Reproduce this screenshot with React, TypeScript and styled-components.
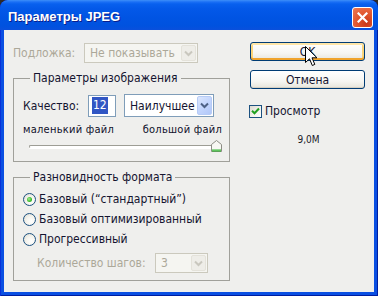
import React from "react";
import styled, { createGlobalStyle } from "styled-components";

const Global = createGlobalStyle`
  html, body { margin: 0; padding: 0; background: #2f2b25; }
  body {
    width: 378px; height: 296px; overflow: hidden;
    font-family: "DejaVu Sans Condensed", "DejaVu Sans", sans-serif;
  }
  * { box-sizing: border-box; }
`;

const Window = styled.div`
  width: 378px;
  height: 296px;
  display: flex;
  flex-direction: column;
  background: #0a4fe2;
  border-radius: 8px 8px 0 0;
  overflow: hidden;
  box-shadow: inset 1px 0 #0831d9, inset -1px 0 #001ea0, inset 0 -1px #001ea0;
`;

const TitleBar = styled.div`
  height: 30px;
  flex: none;
  display: flex;
  align-items: center;
  justify-content: space-between;
  padding: 4px 5px 0 8px;
  background: linear-gradient(
    to bottom,
    #3d8ff8 0px,
    #1a6ff5 2px,
    #0860ee 4px,
    #0358e8 9px,
    #0054e3 18px,
    #0052df 26px,
    #0a50dc 30px
  );
  border-radius: 8px 8px 0 0;
`;

const Title = styled.span`
  font-family: "Liberation Sans", Arial, sans-serif;
  font-weight: bold;
  font-size: 13px;
  color: #ffffff;
  text-shadow: 1px 1px 0 #0a1e8c;
  margin-top: -1px;
`;

const CloseButton = styled.div`
  width: 21px;
  height: 21px;
  border: 1px solid #ffffff;
  border-radius: 3px;
  background: radial-gradient(circle at 70% 80%, #c8381a 0%, #e0542c 45%, #ef7a55 100%);
  display: flex;
  align-items: center;
  justify-content: center;
`;

const Client = styled.div`
  flex: 1;
  margin: 0 4px 4px 4px;
  background: #efefed;
  display: grid;
  grid-template-columns: 217px 115px;
  column-gap: 20px;
  align-items: start;
  padding: 13px 0 0 9px;
  color: #141430;
  font-size: 12px;
`;

const LeftCol = styled.div`
  display: flex;
  flex-direction: column;
`;

const RightCol = styled.div`
  display: flex;
  flex-direction: column;
  margin-top: -1px;
`;

const Row = styled.div<{ $h: number; $mt?: number }>`
  display: flex;
  align-items: center;
  height: ${(p) => p.$h}px;
  margin-top: ${(p) => p.$mt ?? 0}px;
`;

const Label = styled.span<{ $w?: number; $disabled?: boolean }>`
  width: ${(p) => (p.$w ? `${p.$w}px` : "auto")};
  flex: none;
  white-space: nowrap;
  color: ${(p) => (p.$disabled ? "#aca899" : "#141430")};
`;

const SelectBox = styled.div<{ $w: number; $h: number; $disabled?: boolean; $ml?: number }>`
  width: ${(p) => p.$w}px;
  height: ${(p) => p.$h}px;
  margin-left: ${(p) => p.$ml ?? 0}px;
  display: flex;
  align-items: stretch;
  padding: 1px;
  border: 1px solid ${(p) => (p.$disabled ? "#cbc9bd" : "#7f9db9")};
  background: ${(p) => (p.$disabled ? "#f5f5f1" : "#ffffff")};
`;

const SelectText = styled.span<{ $disabled?: boolean }>`
  flex: 1;
  display: flex;
  align-items: center;
  padding-left: 4px;
  white-space: nowrap;
  overflow: hidden;
  color: ${(p) => (p.$disabled ? "#aca899" : "#141430")};
`;

const DropButton = styled.span<{ $disabled?: boolean }>`
  width: 15px;
  flex: none;
  border-radius: 2px;
  display: flex;
  align-items: center;
  justify-content: center;
  border: 1px solid ${(p) => (p.$disabled ? "#e4e2da" : "#b6cbf6")};
  background: ${(p) =>
    p.$disabled
      ? "#eeede8"
      : "linear-gradient(135deg, #dce7fd 0%, #c3d5fd 50%, #b1c7f8 100%)"};
`;

const TextInput = styled.div`
  width: 28px;
  height: 22px;
  flex: none;
  border: 1px solid #7f9db9;
  background: #ffffff;
  display: flex;
  align-items: center;
  padding-left: 3px;
`;

const Selected = styled.span`
  background: #3156c4;
  color: #ffffff;
  padding: 1px 1px;
  line-height: 15px;
`;

const Group = styled.fieldset<{ $mt: number; $pt: number; $pb: number }>`
  margin: ${(p) => p.$mt}px 0 0 0;
  padding: ${(p) => p.$pt}px 7px ${(p) => p.$pb}px 9px;
  border: 1px solid #a0a09a;
  min-width: 0;
  width: 217px;
`;

const Legend = styled.legend`
  padding: 0 3px;
  margin-left: 7px;
  line-height: 14px;
  font-size: 12px;
  color: #141430;
`;

const SmallLabels = styled.div`
  display: flex;
  justify-content: space-between;
  height: 12px;
  margin-top: 7px;
  font-size: 11px;
  letter-spacing: 0.25px;
  line-height: 12px;
  color: #10102a;
`;

const Slider = styled.div`
  position: relative;
  height: 12px;
  margin-top: 4px;
  display: flex;
  align-items: center;
`;

const Track = styled.div`
  height: 3px;
  flex: 1;
  margin: 0 4px 0 6px;
  border-radius: 2px;
  border-top: 1px solid #9d9d95;
  border-left: 1px solid #9d9d95;
  background: #ffffff;
  box-shadow: 0 1px 0 #ffffff;
`;

const Thumb = styled.svg`
  position: absolute;
  right: 0;
  top: 0;
`;

const RadioRow = styled.label`
  display: flex;
  align-items: center;
  gap: 3px;
  height: 20px;
`;

const Radio = styled.span<{ $checked?: boolean }>`
  position: relative;
  width: 13px;
  height: 13px;
  flex: none;
  border-radius: 50%;
  border: 1px solid #1c5180;
  background: radial-gradient(circle at 65% 65%, #ffffff 0%, #f3f2ec 50%, #d8d6cc 100%);
  &::after {
    content: "";
    display: ${(p) => (p.$checked ? "block" : "none")};
    position: absolute;
    left: 3px;
    top: 3px;
    width: 5px;
    height: 5px;
    border-radius: 50%;
    background: radial-gradient(circle at 40% 40%, #a6ef98 0%, #3fbf2f 55%, #1d9a1d 100%);
  }
`;

const StepsRow = styled.div`
  display: flex;
  align-items: center;
  height: 20px;
  margin-top: 4px;
  padding-left: 14px;
`;

const Button = styled.div<{ $default?: boolean; $mt?: number }>`
  position: relative;
  height: 19px;
  margin-top: ${(p) => p.$mt ?? 0}px;
  border: 1px solid #003c74;
  border-radius: 3px;
  display: flex;
  align-items: center;
  justify-content: center;
  color: #141430;
  background: linear-gradient(to bottom, #ffffff 0%, #f6f6f2 60%, #e6e4da 100%);
  box-shadow: ${(p) =>
    p.$default
      ? "inset 0 2px 0 #ffe6a8, inset 0 -2px 0 #f0a42c, inset 2px 0 0 #fbd57a, inset -2px 0 0 #fbd57a"
      : "inset 0 -1px 0 #d6d0c2"};
`;

const Cursor = styled.svg`
  position: absolute;
  left: 54px;
  top: 3px;
`;

const CheckRow = styled.div`
  display: flex;
  align-items: center;
  gap: 3px;
  height: 14px;
  margin-top: 15px;
  margin-left: -1px;
`;

const CheckBox = styled.span`
  width: 13px;
  height: 13px;
  flex: none;
  border: 1px solid #1c5180;
  background: linear-gradient(135deg, #dcdad0 0%, #f4f3ee 60%, #ffffff 100%);
  display: flex;
  align-items: center;
  justify-content: center;
`;

const SizeInfo = styled.div`
  margin-top: 16px;
  text-align: center;
  font-size: 10px;
  line-height: 12px;
  color: #1a1a2a;
  padding-left: 2px;
`;

const Chevron = ({ disabled }: { disabled?: boolean }) => (
  <svg width="9" height="7" viewBox="0 0 9 7">
    <path
      d="M1 1.5 L4.5 5 L8 1.5"
      fill="none"
      stroke={disabled ? "#c9c7be" : "#4d6185"}
      strokeWidth="2"
    />
  </svg>
);

export default function App() {
  return (
    <>
      <Global />
      <Window>
        <TitleBar>
          <Title>Параметры JPEG</Title>
          <CloseButton>
            <svg width="11" height="11" viewBox="0 0 11 11">
              <path d="M1.5 1.5 L9.5 9.5 M9.5 1.5 L1.5 9.5" stroke="#fff" strokeWidth="2.2" strokeLinecap="square" />
            </svg>
          </CloseButton>
        </TitleBar>
        <Client>
          <LeftCol>
            <Row $h={20}>
              <Label $w={71} $disabled>Подложка:</Label>
              <SelectBox $w={114} $h={20} $disabled>
                <SelectText $disabled>Не показывать</SelectText>
                <DropButton $disabled>
                  <Chevron disabled />
                </DropButton>
              </SelectBox>
            </Row>

            <Group $mt={8} $pt={9} $pb={9}>
              <Legend>Параметры изображения</Legend>
              <Row $h={23}>
                <Label $w={65}>Качество:</Label>
                <TextInput>
                  <Selected>12</Selected>
                </TextInput>
                <SelectBox $w={90} $h={23} $ml={8}>
                  <SelectText>Наилучшее</SelectText>
                  <DropButton>
                    <Chevron />
                  </DropButton>
                </SelectBox>
              </Row>
              <SmallLabels>
                <span>маленький файл</span>
                <span>большой файл</span>
              </SmallLabels>
              <Slider>
                <Track />
                <Thumb width="11" height="12" viewBox="0 0 11 12">
                  <path d="M0.5 11.5 V4.5 L5.5 0.5 L10.5 4.5 V11.5 Z" fill="#f7f7f3" stroke="#8c8c84" />
                  <path d="M1 10 H10 M1 11 H10" stroke="#2fb52f" strokeWidth="1" />
                </Thumb>
              </Slider>
            </Group>

            <Group $mt={8} $pt={5} $pb={7}>
              <Legend>Разновидность формата</Legend>
              <RadioRow>
                <Radio $checked />
                <span>Базовый (“стандартный”)</span>
              </RadioRow>
              <RadioRow>
                <Radio />
                <span>Базовый оптимизированный</span>
              </RadioRow>
              <RadioRow>
                <Radio />
                <span>Прогрессивный</span>
              </RadioRow>
              <StepsRow>
                <Label $w={118} $disabled>Количество шагов:</Label>
                <SelectBox $w={53} $h={20} $disabled>
                  <SelectText $disabled>3</SelectText>
                  <DropButton $disabled>
                    <Chevron disabled />
                  </DropButton>
                </SelectBox>
              </StepsRow>
            </Group>
          </LeftCol>

          <RightCol>
            <Button $default>
              OK
              <Cursor width="13" height="21" viewBox="0 0 13 21">
                <path
                  d="M0.5 0.5 L0.5 16.5 L4.5 12.8 L7.3 19.5 L9.8 18.4 L7 11.8 L12 11.8 Z"
                  fill="#ffffff"
                  stroke="#000000"
                  strokeWidth="1"
                  strokeLinejoin="miter"
                />
              </Cursor>
            </Button>
            <Button $mt={9}>Отмена</Button>
            <CheckRow>
              <CheckBox>
                <svg width="9" height="8" viewBox="0 0 9 8">
                  <path d="M1 3.8 L3.5 6.3 L8 1.5" fill="none" stroke="#21a121" strokeWidth="2" />
                </svg>
              </CheckBox>
              <span>Просмотр</span>
            </CheckRow>
            <SizeInfo>9,0M</SizeInfo>
          </RightCol>
        </Client>
      </Window>
    </>
  );
}
